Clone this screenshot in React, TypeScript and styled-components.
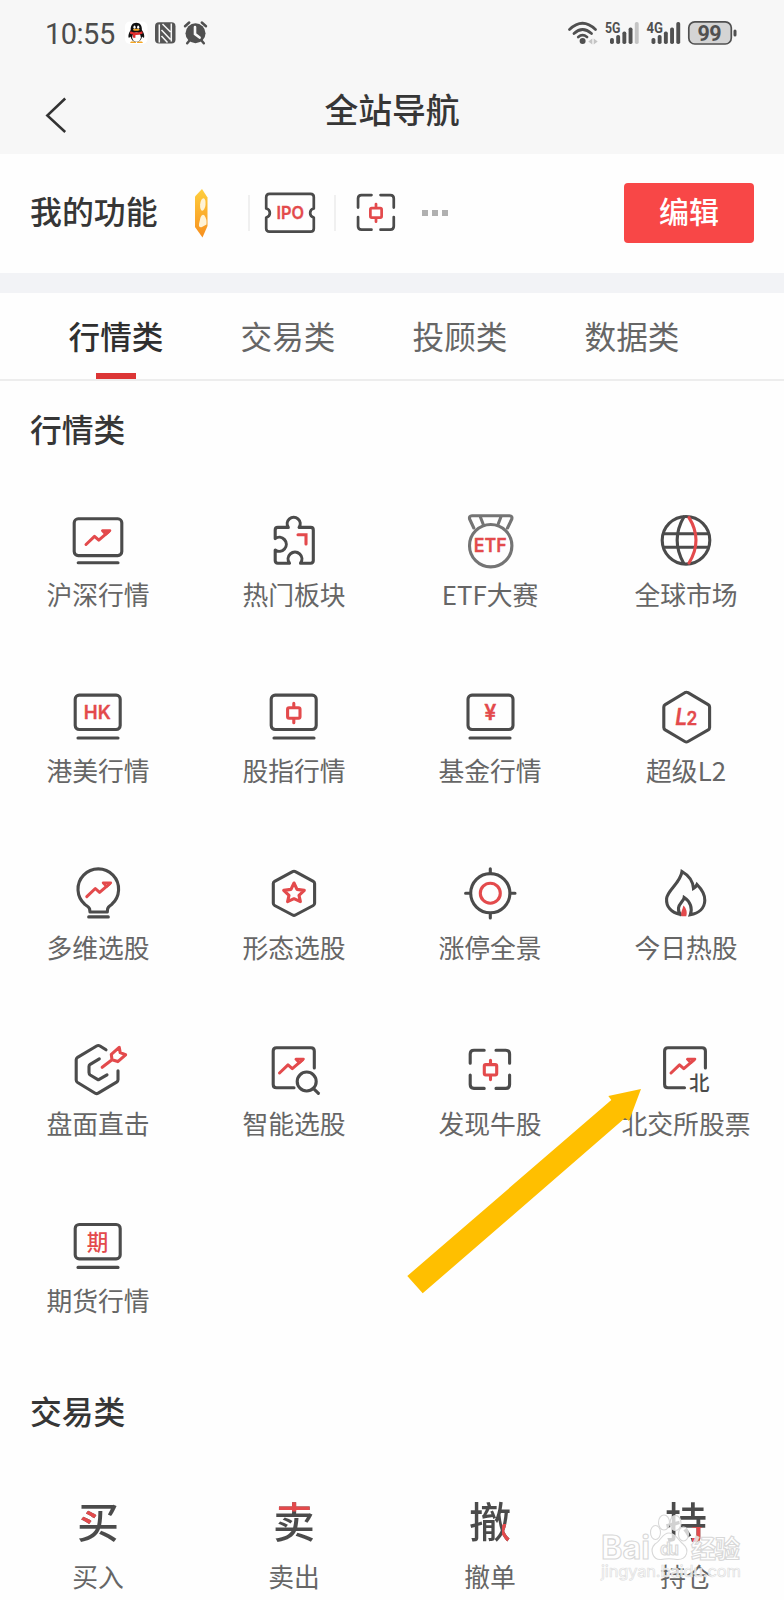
import React from 'react';
import styled, { createGlobalStyle } from 'styled-components';

const INK = '#4b4b4b';
const RED = '#e34a4c';
const CJK = "'Noto Sans CJK SC', sans-serif";

const GlobalStyle = createGlobalStyle`
  * { box-sizing: border-box; }
  html, body { margin: 0; padding: 0; background: #fff; }
  body { font-family: ${CJK}; color: #363636; }
`;

const Page = styled.div`
  position: relative;
  width: 784px;
  height: 1600px;
  overflow: hidden;
  background: #fefefe;
  display: flex;
  flex-direction: column;
`;

const StatusBar = styled.header`
  height: 66px;
  flex: none;
  display: flex;
  align-items: center;
  justify-content: space-between;
  padding: 0 46px 0 45px;
  background: #f7f7f7;
`;

const StatusGroup = styled.div`
  display: flex;
  align-items: center;
`;

const Clock = styled.span`
  width: 77px;
  padding-top: 2px;
  font: 400 29px/32px Roboto, sans-serif;
  letter-spacing: -0.5px;
  color: #4c4c4c;
`;

const NavBar = styled.nav`
  height: 88px;
  flex: none;
  display: grid;
  grid-template-columns: 110px 1fr 110px;
  align-items: center;
  background: #f7f7f7;
`;

const BackButton = styled.button`
  border: 0;
  background: none;
  padding: 9px 0 0 44px;
  display: flex;
`;

const PageTitle = styled.h1`
  margin: 0;
  text-align: center;
  font-size: 33.8px;
  line-height: 40px;
  font-weight: 500;
  padding-bottom: 3px;
`;

const MyTools = styled.section`
  height: 119px;
  flex: none;
  display: flex;
  align-items: center;
  padding: 0 30px 2px;
`;

const MyTitle = styled.h2`
  margin: 0;
  width: 154px;
  font-size: 31.9px;
  line-height: 40px;
  font-weight: 500;
  padding-bottom: 5px;
`;

const ToolSlot = styled.div<{ $w: number; $divider?: boolean; $end?: number }>`
  width: ${(p) => p.$w}px;
  height: 36px;
  display: flex;
  align-items: center;
  justify-content: center;
  padding-right: ${(p) => p.$end ?? 0}px;
  border-left: ${(p) => (p.$divider ? '2px solid #f0f0f0' : '0')};
  svg { flex: none; }
`;

const MoreDots = styled.div`
  display: flex;
  gap: 4px;
  margin-left: 5px;
  i { width: 6px; height: 6px; background: #b0b0b0; }
`;

const EditButton = styled.button`
  margin-left: auto;
  width: 130px;
  height: 60px;
  border: 0;
  border-radius: 4px;
  background: #f84747;
  color: #fff;
  font: 500 30px/40px ${CJK};
  padding: 0 0 5px;
`;

const Band = styled.div`
  height: 20px;
  flex: none;
  background: #f2f3f6;
`;

const Tabs = styled.div`
  height: 88px;
  flex: none;
  display: flex;
  padding-left: 30px;
  border-bottom: 2px solid #ededed;
`;

const Tab = styled.div<{ $active?: boolean }>`
  width: 172px;
  display: flex;
  flex-direction: column;
  align-items: center;
  justify-content: space-between;
  padding-top: 21px;
  font-size: 31.6px;
  line-height: 42px;
  font-weight: ${(p) => (p.$active ? 500 : 400)};
  color: ${(p) => (p.$active ? '#2f2f2f' : '#666')};
  &::after {
    content: '';
    width: 40px;
    height: 6px;
    background: ${(p) => (p.$active ? '#dc3535' : 'transparent')};
  }
`;

const Section = styled.section<{ $top: number }>`
  flex: none;
  padding-top: ${(p) => p.$top}px;
`;

const SectionTitle = styled.h2`
  margin: 0 0 62px 30px;
  font-size: 31.8px;
  line-height: 38px;
  font-weight: 500;
`;

const Grid = styled.div`
  display: grid;
  grid-template-columns: repeat(4, 196px);
  grid-auto-rows: 176.4px;
`;

const Tile = styled.div`
  display: flex;
  flex-direction: column;
  align-items: center;
`;

const Label = styled.span`
  margin-top: 6px;
  font-size: 25.8px;
  line-height: 30px;
  color: #666;
  white-space: nowrap;
`;

const CharIcon = styled.span<{ $accent: string }>`
  width: 64px;
  height: 64px;
  display: flex;
  justify-content: center;
  font-size: 42px;
  line-height: 58px;
  font-weight: 500;
  color: transparent;
  background: ${(p) => p.$accent}, linear-gradient(${INK}, ${INK});
  background-clip: text;
  -webkit-background-clip: text;
`;

const PointerArrow = styled.svg`
  position: absolute;
  left: 400px;
  top: 1080px;
`;

const Watermark = styled.svg`
  position: absolute;
  left: 596px;
  top: 1508px;
`;

const Icon = ({ children }: { children: React.ReactNode }) => (
  <svg width="64" height="64" viewBox="0 0 64 64" fill="none" stroke={INK} strokeWidth="3.1" strokeLinecap="round" strokeLinejoin="round">
    {children}
  </svg>
);

const Trend = ({ x = 0, y = 0 }: { x?: number; y?: number }) => (
  <g transform={`translate(${x} ${y})`} stroke={RED} strokeWidth="3">
    <path d="M20 35.5 28.5 27.3 32.8 31.2 43 22.4" />
    <path d="M36.3 21.6H44L39.8 25.4Z" strokeWidth="2.6" />
  </g>
);

const Monitor = ({ x = 0, y = 0, children }: { x?: number; y?: number; children: React.ReactNode }) => (
  <Icon>
    <rect x={9.2 + x} y={10.1 + y} width="45" height="34.4" rx="4" />
    <path d={`M12 ${53 + y}H52`} />
    {children}
  </Icon>
);

const Candle = ({ x = 31.8, y = 28 }: { x?: number; y?: number }) => (
  <g transform={`translate(${x} ${y})`} stroke={RED}>
    <rect x="-6.2" y="-5.2" width="12.4" height="10.4" rx="1.5" />
    <path d="M0 -9.6V-6M0 6V9.8" />
  </g>
);

const GlyphText = styled.text`
  fill: ${RED};
  stroke: ${RED};
  stroke-width: 0.3px;
  font-family: Inter, sans-serif;
  font-weight: 600;
`;

const Shenzhen = () => (
  <Icon>
    <rect x="8.2" y="9.8" width="47.6" height="36.8" rx="4" />
    <path d="M12.2 53.7H52" />
    <Trend />
  </Icon>
);

const Puzzle = () => (
  <Icon>
    <path d="M13.2 21Q13.2 18.4 15.8 18.4H26.3A6.5 6.5 0 1 1 37.1 18.4H48.7Q51.3 18.4 51.3 21V51.6Q51.3 54.2 48.7 54.2H38.5A6.9 6.9 0 1 0 27.5 54.2H15.8Q13.2 54.2 13.2 51.6V41A7 7 0 1 0 13.2 29.6Z" />
    <path d="M36 25.7H44V35" stroke={RED} strokeLinejoin="miter" />
  </Icon>
);

const Medal = () => (
  <Icon>
    <g stroke="#747474">
      <circle cx="32.7" cy="36.7" r="21.2" />
      <path d="M15.8 19 11.6 10Q10.8 6.8 14 6.7H51.5Q54.6 6.8 53.8 10L49.5 19M22.3 7.8 25.2 15.2M43 7.8 40.1 15.2" />
    </g>
    <GlyphText x="15.8" y="43.3" fontSize="19" textLength="33" lengthAdjust="spacingAndGlyphs">ETF</GlyphText>
  </Icon>
);

const Globe = () => (
  <Icon>
    <circle cx="32" cy="31.3" r="23.8" />
    <path d="M10 24.7H54M10 38.3H54M29.8 8Q16.5 31 29.8 54.5" />
    <path d="M35 8.6Q49 31 35 54" stroke={RED} />
  </Icon>
);

const LevelTwo = () => (
  <Icon>
    <path d="M30.8 7.7Q32.4 6.8 34 7.7L54.2 19.6Q55.6 20.5 55.6 22V42.5Q55.6 44 54.2 44.9L34 56.5Q32.4 57.4 30.8 56.5L11.2 44.9Q9.8 44 9.8 42.5V22Q9.8 20.5 11.2 19.6Z" />
    <GlyphText x="21.2" y="39.6" fontSize="23.500" fontStyle="italic" textLength="12" lengthAdjust="spacingAndGlyphs">L</GlyphText>
    <GlyphText x="32.6" y="39.6" fontSize="18" textLength="10.800" lengthAdjust="spacingAndGlyphs">2</GlyphText>
  </Icon>
);

const Bulb = () => (
  <Icon>
    <path d="M19 42.5A20.3 20.3 0 1 1 45.6 42.5Q41.8 45 41.6 47L41.3 50H24L23.6 47Q23 45 19 42.5Z" />
    <path d="M22.7 54.9H42.3" />
    <Trend x={0.8} y={-0.8} />
  </Icon>
);

const HexStar = () => (
  <Icon>
    <path d="M30.6 9.6Q32 8.8 33.4 9.6L51.3 19.3Q52.6 20 52.6 21.5V41.3Q52.6 42.8 51.3 43.5L33.4 53Q32 53.8 30.6 53L12.6 43.5Q11.3 42.8 11.3 41.3V21.5Q11.3 20 12.6 19.3Z" />
    <path d="M32 21 35 27.4 42.3 28.4 37 33.4 38.4 39.6 32 36.7 25.6 39.6 27 33.4 21.7 28.4 29 27.4Z" stroke={RED} />
  </Icon>
);

const Target = () => (
  <Icon>
    <circle cx="32.3" cy="31.2" r="19.6" />
    <path d="M32.3 6.8V11M32.3 51.5V56M7.6 31.2H12M52.5 31.2H57" />
    <circle cx="32.3" cy="31.2" r="10" stroke={RED} />
  </Icon>
);

const Flame = () => (
  <Icon>
    <path strokeLinejoin="miter" d="M26.5 52.6C17 50.5 12 44.5 12.6 36.5C13.5 28 26.5 21 28 9.5C34 13 39 19 39.5 26.5Q41.7 25.2 43 22.5C47.5 27 51 33 50.8 38.5C50.6 46 45 51.2 36.3 52.8C38.7 46.5 36.5 39.5 30.2 35.5C29.8 39 25 41.5 24.5 46Q24.2 50 26.5 52.6" />
    <path d="M29.3 43.5C32.5 46 33.5 51 32.2 54.3H27.6C26 51 28.8 47.5 29.3 43.5Z" fill={RED} stroke="none" />
  </Icon>
);

const Bullseye = () => (
  <Icon>
    <path d="M40 11.8 34 8Q32.3 7 30.6 8L11.6 19.3Q10.2 20.2 10.2 21.8V42Q10.2 43.6 11.6 44.5L29.2 55.2Q30.7 56.1 32.2 55.2L50.6 44.2Q52 43.3 52 41.8V32.8" />
    <path d="M33.3 20.9 24.2 26.3Q23 27.2 23 28.6V34.6Q23 36.2 24.2 37L32.3 41.8 41 36.8" />
    <path d="M36.2 29.3 46 21.8 45.3 16.4 53.2 9.4 54.2 14.6 59.6 16.8 51.8 23.6 46 21.8" stroke={RED} />
  </Icon>
);

const SmartPick = () => (
  <Icon>
    <path d="M32 49.8H14.5Q11.2 49.8 11.2 46.5V13Q11.2 9.8 14.5 9.8H49Q52.3 9.8 52.3 13V30" />
    <circle cx="44.7" cy="43.5" r="9.5" />
    <path d="M51.6 50.6 56.4 55.4" />
    <Trend x={-2.5} y={-0.5} />
  </Icon>
);

const Focus = () => (
  <Icon>
    <path d="M26.2 12.2H16Q12.2 12.2 12.2 16V25.2M38 12.2H47.8Q51.6 12.2 51.6 16V25.2M12.2 37V46.6Q12.2 50.4 16 50.4H26.2M51.6 37V46.6Q51.6 50.4 47.8 50.4H38" />
    <Candle x={32.5} y={31.8} />
  </Icon>
);

const Beijing = () => (
  <Icon>
    <path d="M30.5 49.8H13.9Q10.6 49.8 10.6 46.5V13Q10.6 9.8 13.9 9.8H48.1Q51.4 9.8 51.4 13V30" />
    <Trend x={-3} y={-0.5} />
    <text x="35" y="53" fontSize="20.5" fontWeight="500" fill={INK} stroke="none" fontFamily={CJK}>北</text>
  </Icon>
);

const BUY = `linear-gradient(${RED}, ${RED}) 12px 18px / 18.5px 15.5px no-repeat`;
const SELL = `linear-gradient(${RED}, ${RED}) 0 0 / 64px 20.5px no-repeat`;
const CANCEL = `linear-gradient(${RED}, ${RED}) 44px 33px / 10px 20px no-repeat`;
const HOLD = `linear-gradient(${RED}, ${RED}) 38px 36px / 10px 20px no-repeat`;

const quotes: [string, React.ReactNode][] = [
  ['沪深行情', <Shenzhen />],
  ['热门板块', <Puzzle />],
  ['ETF大赛', <Medal />],
  ['全球市场', <Globe />],
  ['港美行情', <Monitor><GlyphText x="17.8" y="34.4" fontSize="18.4" textLength="27" lengthAdjust="spacingAndGlyphs">HK</GlyphText></Monitor>],
  ['股指行情', <Monitor><Candle /></Monitor>],
  ['基金行情', <Monitor x={0.8}><GlyphText x="32.4" y="35.4" fontSize="21.500" textAnchor="middle">¥</GlyphText></Monitor>],
  ['超级L2', <LevelTwo />],
  ['多维选股', <Bulb />],
  ['形态选股', <HexStar />],
  ['涨停全景', <Target />],
  ['今日热股', <Flame />],
  ['盘面直击', <Bullseye />],
  ['智能选股', <SmartPick />],
  ['发现牛股', <Focus />],
  ['北交所股票', <Beijing />],
  ['期货行情', <Monitor y={-0.6}><text x="20.8" y="35.2" fontSize="21.5" fontWeight="500" fill={RED} stroke="none" fontFamily={CJK}>期</text></Monitor>],
];

const trades: [string, React.ReactNode][] = [
  ['买入', <CharIcon $accent={BUY}>买</CharIcon>],
  ['卖出', <CharIcon $accent={SELL}>卖</CharIcon>],
  ['撤单', <CharIcon $accent={CANCEL}>撤</CharIcon>],
  ['持仓', <CharIcon $accent={HOLD}>持</CharIcon>],
];

const Tiles = ({ items }: { items: [string, React.ReactNode][] }) => (
  <Grid>
    {items.map(([label, icon]) => (
      <Tile key={label}>
        {icon}
        <Label>{label}</Label>
      </Tile>
    ))}
  </Grid>
);

const LeftStatusIcons = () => (
  <svg width="88" height="32" viewBox="122 17 88 32">
    <rect x="125" y="21.5" width="22.5" height="22.5" rx="5" fill="#fff" />
    <path d="M131 41.5h5v1.6h-6ZM137 41.5h5l1 1.6h-6Z" fill="#f5a623" />
    <path d="M136.3 22.8c-3.8 0-5.8 2.8-5.6 7.2-1.8 2.6-2.7 5.6-2.1 7.5.5.6 1.5-.2 2-1 .6 3.4 2.6 5.3 5.7 5.3s5.200-1.900 5.800-5.300c.5.800 1.500 1.600 2 1 .600-1.900-.300-4.900-2.200-7.500.200-4.400-1.800-7.200-5.600-7.200Z" fill="#111" />
    <ellipse cx="136.5" cy="37.2" rx="4.3" ry="4.6" fill="#fff" />
    <ellipse cx="134.5" cy="27.2" rx="1.1" ry="1.6" fill="#fff" />
    <ellipse cx="138.2" cy="27.2" rx="1.1" ry="1.6" fill="#fff" />
    <ellipse cx="136.3" cy="29.8" rx="3.3" ry="1" fill="#f5a623" />
    <path d="M130.3 31.2q6 2.6 12 0l.4 2.3q-4 1.7-7.2 1.5l-.2 3-2.5-.4.2-3q-1.7-.2-3.1-1Z" fill="#e33030" />
    <rect x="155" y="22.3" width="20.5" height="21.2" rx="4" fill="#555" />
    <path d="M159.3 24.500v18M171.300 23.500v18M162.500 24l8 8M161.500 30l9 9.500M161.500 36l6 6.500" stroke="#f7f7f7" strokeWidth="1.5" fill="none" />
    <circle cx="195.5" cy="33.2" r="10" fill="#505050" />
    <path d="M185 26.2l4.2-3.7M206 26.2l-4.2-3.7M189.5 40.5l-2.3 2.8M201.5 40.5l2.3 2.8" stroke="#505050" strokeWidth="2.5" strokeLinecap="round" />
    <path d="M195 27v7l4.6 3.6" stroke="#f7f7f7" strokeWidth="2.6" fill="none" strokeLinecap="round" />
  </svg>
);

const SIGNAL = [6, 9, 12.5, 16.5, 22];

const Signal = ({ x, weak }: { x: number; weak?: boolean }) => (
  <>
    {SIGNAL.map((h, i) => (
      <rect key={h} x={x + i * 6.2} y={44 - h} width="3.9" height={h} rx="1.7" fill={weak && i === 4 ? '#c4c4c4' : '#505050'} />
    ))}
  </>
);

const RightStatusIcons = () => (
  <svg width="172" height="32" viewBox="566 17 172 32">
    <g fill="none" stroke="#505050" strokeWidth="2.7" strokeLinecap="round">
      <path d="M569.5 29.5Q582.5 17 595.5 29.5M574 33.5Q582.5 25.5 591.5 33.5M578.3 37Q582.5 33.3 587 37" />
    </g>
    <circle cx="582.6" cy="41" r="3" fill="#505050" />
    <path d="M592.3 38.5v6l-4-3ZM593.7 38.5v6l4-3Z" fill="#c4c4c4" />
    <g fill="#505050" fontFamily="Roboto, sans-serif" fontWeight="700" fontSize="15">
      <text x="605" y="32.7" textLength="15.5" lengthAdjust="spacingAndGlyphs">5G</text>
      <text x="646.5" y="32.7" textLength="16.5" lengthAdjust="spacingAndGlyphs">4G</text>
    </g>
    <Signal x={610} weak />
    <Signal x={651.5} />
    <rect x="688.8" y="21.8" width="42.5" height="22.2" rx="6" fill="#d4d4d4" stroke="#505050" strokeWidth="1.7" />
    <rect x="733.5" y="29.5" width="3" height="7" rx="1.5" fill="#505050" />
    <text x="697.5" y="40.6" fill="#505050" fontFamily="Roboto, sans-serif" fontWeight="700" fontSize="21.5" textLength="24">99</text>
  </svg>
);

const Gold = () => (
  <svg width="20" height="56" viewBox="0 0 20 56">
    <defs>
      <linearGradient id="gold" x1="0" y1="0" x2="0" y2="1">
        <stop offset="0" stopColor="#ffcf3d" />
        <stop offset="1" stopColor="#f78f1e" />
      </linearGradient>
    </defs>
    <path d="M10 4 15.5 12.5V41L10.5 52.5 3 42V11.5Z" fill="url(#gold)" />
    <ellipse cx="10.8" cy="19.5" rx="2.7" ry="6.3" fill="#fff3d6" transform="rotate(6 11 20)" />
    <path d="M8.5 32.5Q10 28.5 12.5 30.5Q15 34 14.5 39.5L10 42Q6.5 43 7 39Z" fill="#fff3d6" />
  </svg>
);

const Ticket = () => (
  <svg width="52" height="42" viewBox="0 0 52 42" fill="none" stroke={INK} strokeWidth="2.7" strokeLinejoin="round">
    <path d="M5.5 1.8H46.5Q49.8 1.8 49.8 5V16.5A4.6 4.6 0 0 0 49.8 25.5V36.5Q49.8 39.7 46.5 39.7H5.5Q2.2 39.7 2.2 36.5V25.5A4.6 4.6 0 0 0 2.2 16.5V5Q2.2 1.8 5.5 1.8Z" />
    <GlyphText x="12.5" y="27.2" fontSize="17.5" textLength="27.5" lengthAdjust="spacingAndGlyphs">IPO</GlyphText>
  </svg>
);

const FocusSmall = () => (
  <svg width="58" height="58" viewBox="0 0 64 64" fill="none" stroke={INK} strokeWidth="3" strokeLinecap="round">
    <path d="M27 12.2H16Q12.2 12.2 12.2 16V26M37 12.2H47.8Q51.6 12.2 51.6 16V26M12.2 36.5V46.6Q12.2 50.4 16 50.4H27M51.6 36.5V46.6Q51.6 50.4 47.8 50.4H37" />
    <Candle x={32} y={31.8} />
  </svg>
);

const BrandMark = () => (
  <Watermark width="160" height="92" viewBox="596 1508 160 92">
    <g fill="#fff" fillOpacity="0.75" stroke="#d8d8d8" strokeWidth="1.1">
      <ellipse cx="655.5" cy="1532.5" rx="5" ry="7" />
      <ellipse cx="664" cy="1522.500" rx="5.5" ry="7.5" />
      <ellipse cx="675.5" cy="1523" rx="5.5" ry="7.5" />
      <ellipse cx="683.5" cy="1534" rx="5" ry="7" />
      <path d="M669 1533C662 1533 661 1541 655 1544C649 1550 653 1560 661 1559.5Q669 1558 677 1559.5C687 1560 690 1550 683 1544C678 1540 676 1533 669 1533Z" />
      <text x="601" y="1559" fontFamily="Inter, sans-serif" fontWeight="700" fontSize="32" textLength="49" lengthAdjust="spacingAndGlyphs">Bai</text>
      <text x="660" y="1555" fontFamily="Inter, sans-serif" fontWeight="600" fontSize="17" textLength="19">du</text>
      <text x="691" y="1557.500" fontFamily={CJK} fontWeight="700" fontSize="25" textLength="49">经验</text>
    </g>
    <text x="601" y="1577" fontFamily="Inter, sans-serif" fontSize="16.5" fill="#fff" fillOpacity="0.8" stroke="#dedede" strokeWidth="0.7" textLength="140">jingyan.baidu.com</text>
  </Watermark>
);

export default function App() {
  return (
    <Page>
      <GlobalStyle />
      <StatusBar>
        <StatusGroup>
          <Clock>10:55</Clock>
          <LeftStatusIcons />
        </StatusGroup>
        <RightStatusIcons />
      </StatusBar>
      <NavBar>
        <BackButton aria-label="返回">
          <svg width="24" height="38" viewBox="0 0 24 38" fill="none" stroke="#333" strokeWidth="2.5">
            <path d="M21.2 2.5 3.3 19.5 21.2 36" />
          </svg>
        </BackButton>
        <PageTitle>全站导航</PageTitle>
      </NavBar>
      <MyTools>
        <MyTitle>我的功能</MyTitle>
        <ToolSlot $w={64} $end={28}>
          <Gold />
        </ToolSlot>
        <ToolSlot $w={86} $divider $end={3.5}>
          <Ticket />
        </ToolSlot>
        <ToolSlot $w={83} $divider $end={2}>
          <FocusSmall />
        </ToolSlot>
        <MoreDots><i /><i /><i /></MoreDots>
        <EditButton>编辑</EditButton>
      </MyTools>
      <Band />
      <Tabs>
        <Tab $active>行情类</Tab>
        <Tab>交易类</Tab>
        <Tab>投顾类</Tab>
        <Tab>数据类</Tab>
      </Tabs>
      <Section $top={28}>
        <SectionTitle>行情类</SectionTitle>
        <Tiles items={quotes} />
      </Section>
      <Section $top={0}>
        <SectionTitle>交易类</SectionTitle>
        <Tiles items={trades} />
      </Section>
      <PointerArrow width="250" height="220" viewBox="400 1080 250 220">
        <path d="M641 1089 608.3 1096 611.3 1100 407.3 1276 422.7 1293.3 625 1118 629 1121Z" fill="#ffbf00" />
      </PointerArrow>
      <BrandMark />
    </Page>
  );
}
